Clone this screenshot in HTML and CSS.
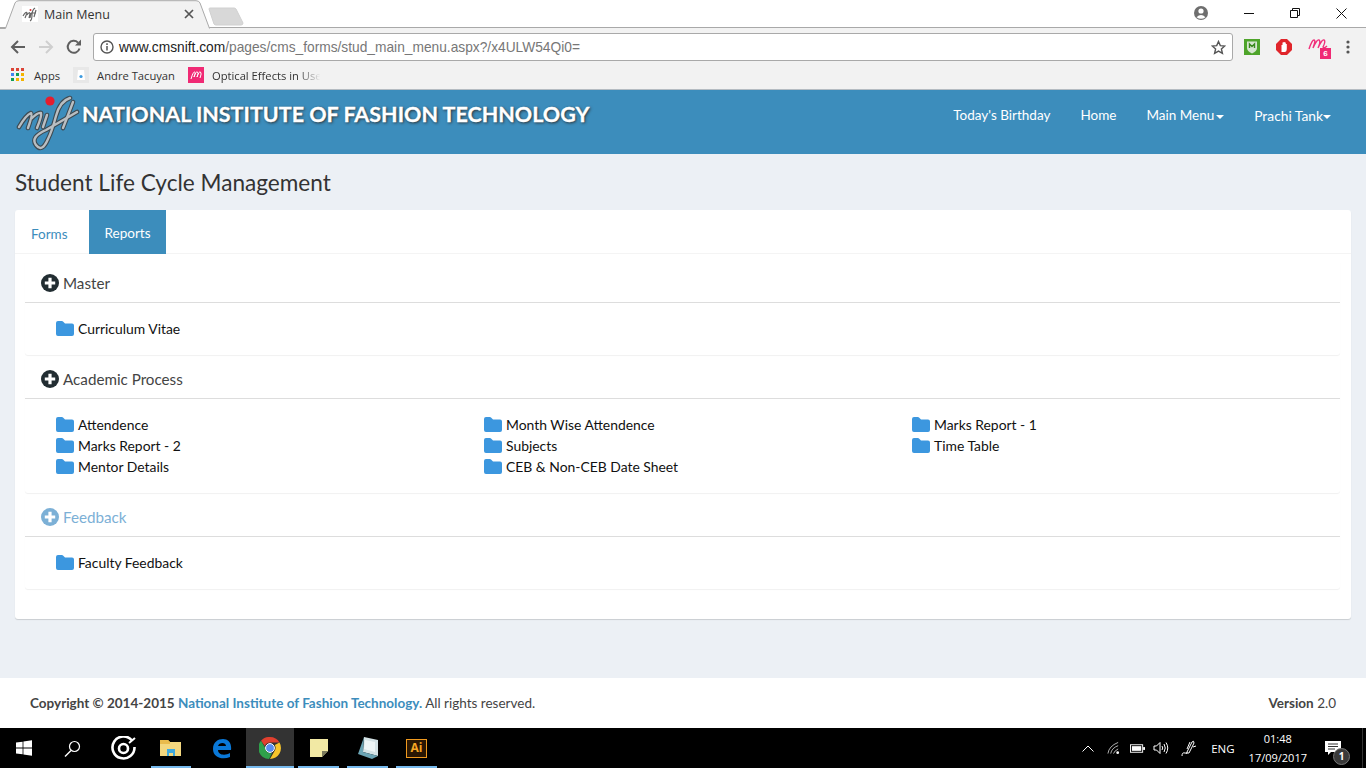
FILE: index.html
```html
<!DOCTYPE html>
<html lang="en">
<head>
<meta charset="utf-8">
<title>Main Menu</title>
<link rel="stylesheet" href="styles.css">
</head>
<body>
<div class="browser">
  <div class="tabstrip">
    <div class="tab">
      <svg class="tab-shape" width="210" height="29" viewBox="0 0 210 29"><path d="M0 28.5H5.5L15 3Q16 .7 19 .7H196Q199 .7 200 3L209.5 28.5" fill="#f2f2f2" stroke="#a9a9a9"/></svg>
      <svg class="favicon" width="16" height="16" viewBox="0 0 16 16"><rect width="16" height="16" fill="#fff"/><path d="M1 10Q4 5 5 7L3 12M5 9Q8 5 8 8L7 12M9 7L8 12M13 2Q10 4 10 9T8 15M9 7H14M14 4L12 11" fill="none" stroke="#666" stroke-width="1.2"/><circle cx="8.5" cy="4" r="1" fill="#d33"/></svg>
      <span class="tab-title">Main Menu</span>
      <svg class="tab-x" width="10" height="10" viewBox="0 0 10 10"><path d="M1 1L9 9M9 1L1 9" stroke="#555" stroke-width="1.7"/></svg>
    </div>
    <svg class="newtab" width="36" height="19" viewBox="0 0 36 19"><path d="M1 2Q1 1 2 1H26Q27 1 28 2L35 16Q35 18 33 18H8Q7 18 6 17Z" fill="#d8d8d8" stroke="#d0d0d0"/></svg>
    <div class="winctl">
      <svg class="user" width="16" height="16" viewBox="0 0 16 16"><circle cx="8" cy="8" r="7" fill="#6e6e6e"/><circle cx="8" cy="6" r="2.6" fill="#fff"/><path d="M3.5 12.2Q8 8 12.5 12.2Q8 15.5 3.5 12.2Z" fill="#fff"/></svg>
      <span class="winbtn"><svg width="10" height="10" viewBox="0 0 10 10"><path d="M0 5.5H10" stroke="#111"/></svg></span>
      <span class="winbtn"><svg width="10" height="10" viewBox="0 0 10 10"><path d="M.5 2.5H7.5V9.5H.5ZM2.5 2.5V.5H9.5V7.5H7.5" fill="none" stroke="#111"/></svg></span>
      <span class="winbtn"><svg width="11" height="11" viewBox="0 0 11 11"><path d="M.5.5L10.5 10.5M10.5.5L.5 10.5" stroke="#111"/></svg></span>
    </div>
  </div>
  <div class="toolbar">
    <svg class="navicon" width="16" height="16" viewBox="0 0 16 16"><path d="M15 8H2M8 2L2 8L8 14" fill="none" stroke="#5f5f5f" stroke-width="2"/></svg>
    <svg class="navicon" width="16" height="16" viewBox="0 0 16 16"><path d="M1 8H14M8 2L14 8L8 14" fill="none" stroke="#cfcfcf" stroke-width="2"/></svg>
    <svg class="navicon" width="16" height="16" viewBox="0 0 16 16"><path d="M13.5 9.5A6 6 0 1 1 12 3.6" fill="none" stroke="#5f5f5f" stroke-width="2"/><path d="M9 6.5H15V.5Z" fill="#5f5f5f"/></svg>
    <div class="omnibox">
      <svg width="14" height="14" viewBox="0 0 14 14"><circle cx="7" cy="7" r="6" fill="none" stroke="#555" stroke-width="1.4"/><path d="M7 6V10.5M7 3.2V4.9" stroke="#555" stroke-width="1.5"/></svg>
      <span class="url"><b>www.cmsnift.com</b>/pages/cms_forms/stud_main_menu.aspx?/x4ULW54Qi0=</span>
      <svg class="star" width="15" height="15" viewBox="0 0 15 15"><path d="M7.5 1.5L9.3 5.6L13.8 6L10.4 9L11.4 13.4L7.5 11.1L3.6 13.4L4.6 9L1.2 6L5.7 5.6Z" fill="none" stroke="#555" stroke-width="1.4"/></svg>
    </div>
    <div class="exts">
      <svg width="16" height="16" viewBox="0 0 16 16"><rect width="16" height="16" fill="#4ea42a"/><path d="M3 2.5H13V9Q13 12 8 14.5Q3 12 3 9Z" fill="#d6e6d0"/><path d="M5.5 9V5L8 7.5L10.5 5V9" fill="none" stroke="#3a8a1e" stroke-width="1.4"/></svg>
      <svg width="16" height="16" viewBox="0 0 16 16"><path d="M5 0H11L16 5V11L11 16H5L0 11V5Z" fill="#e0252b"/><path d="M5.5 13V6H6.5V3.5H7.5V3H8.7V3.5H9.8V5H10.8V9.5Q10.8 13 8.5 13Z" fill="#fff"/></svg>
      <span class="ext-m"><svg width="20" height="14" viewBox="0 0 20 14"><path d="M1 12Q4 3 6 3T5 11Q9 2 11 3T10 11Q14 2 16 3T15 10Q16 12 19 9" fill="none" stroke="#f0307a" stroke-width="1.4"/></svg><span class="badge">6</span></span>
      <svg width="4" height="14" viewBox="0 0 4 14"><circle cx="2" cy="2" r="1.6" fill="#555"/><circle cx="2" cy="7" r="1.6" fill="#555"/><circle cx="2" cy="12" r="1.6" fill="#555"/></svg>
    </div>
  </div>
  <div class="bookmarks">
    <span class="bm bm-apps">
      <svg width="14" height="14" viewBox="0 0 14 14"><g fill="#db4437"><rect width="3" height="3"/><rect x="5" width="3" height="3"/><rect x="10" width="3" height="3"/></g><g fill="#4285f4"><rect y="5" width="3" height="3"/></g><g fill="#0f9d58"><rect x="5" y="5" width="3" height="3"/><rect y="10" width="3" height="3"/></g><g fill="#f4b400"><rect x="10" y="5" width="3" height="3"/><rect x="5" y="10" width="3" height="3"/><rect x="10" y="10" width="3" height="3"/></g></svg>
      Apps
    </span>
    <span class="bm">
      <svg width="16" height="16" viewBox="0 0 16 16"><rect width="16" height="16" fill="#e8e8e8"/><path d="M5 3H11L12 13H4Z" fill="#fff"/><circle cx="8" cy="9.5" r="1.6" fill="#3d9be0"/></svg>
      Andre Tacuyan
    </span>
    <span class="bm bm-fade">
      <svg width="16" height="16" viewBox="0 0 16 16"><rect width="16" height="16" fill="#f02a74"/><path d="M3 12Q5 5 6.5 5T6 10Q8 4 9.5 5T9 10Q11 4 12.5 5T12 11" fill="none" stroke="#fff"/></svg>
      Optical Effects in User
    </span>
  </div>
</div>

<header class="navbar">
  <svg class="logo" width="64" height="62" viewBox="0 0 64 62"><g fill="none" stroke-linecap="round" stroke-linejoin="round" stroke="#3d4a52" stroke-width="4.6"><path d="M3 35Q10 23 15 21Q17 22 12 36M15 27Q22 20 25 21Q26 24 21 36"/><path d="M31 23L27 35"/><path d="M54 6Q44 9 40 24T32 47Q26 61 20 53T30 38L61 20"/><path d="M57 10Q51 26 47 36"/></g><g fill="none" stroke-linecap="round" stroke-linejoin="round" stroke="#b9bec2" stroke-width="2.4"><path d="M3 35Q10 23 15 21Q17 22 12 36M15 27Q22 20 25 21Q26 24 21 36"/><path d="M31 23L27 35"/><path d="M54 6Q44 9 40 24T32 47Q26 61 20 53T30 38L61 20"/><path d="M57 10Q51 26 47 36"/></g><circle cx="34" cy="9" r="4.6" fill="#e51d2e"/></svg>
  <h1 class="brand">NATIONAL INSTITUTE OF FASHION TECHNOLOGY</h1>
  <nav class="navlinks">
    <a>Today's Birthday</a>
    <a>Home</a>
    <a>Main Menu<i class="caret"></i></a>
    <a class="last">Prachi Tank<i class="caret tight"></i></a>
  </nav>
</header>

<main class="content">
  <h2 class="pagetitle">Student Life Cycle Management</h2>
  <div class="card">
    <div class="tabs">
      <a class="tablink">Forms</a>
      <a class="tablink active">Reports</a>
    </div>
    <section class="group">
      <h3 class="grouphead"><svg class="plus" width="18" height="18" viewBox="0 0 18 18"><use href="#plus"/></svg>Master</h3>
      <div class="items">
        <a class="item"><svg class="folder" width="18" height="15" viewBox="0 0 18 15"><use href="#folder"/></svg>Curriculum Vitae</a>
      </div>
    </section>
    <section class="group">
      <h3 class="grouphead"><svg class="plus" width="18" height="18" viewBox="0 0 18 18"><use href="#plus"/></svg>Academic Process</h3>
      <div class="items">
        <a class="item"><svg class="folder" width="18" height="15" viewBox="0 0 18 15"><use href="#folder"/></svg>Attendence</a>
        <a class="item"><svg class="folder" width="18" height="15" viewBox="0 0 18 15"><use href="#folder"/></svg>Month Wise Attendence</a>
        <a class="item"><svg class="folder" width="18" height="15" viewBox="0 0 18 15"><use href="#folder"/></svg>Marks Report - 1</a>
        <a class="item"><svg class="folder" width="18" height="15" viewBox="0 0 18 15"><use href="#folder"/></svg>Marks Report - 2</a>
        <a class="item"><svg class="folder" width="18" height="15" viewBox="0 0 18 15"><use href="#folder"/></svg>Subjects</a>
        <a class="item"><svg class="folder" width="18" height="15" viewBox="0 0 18 15"><use href="#folder"/></svg>Time Table</a>
        <a class="item"><svg class="folder" width="18" height="15" viewBox="0 0 18 15"><use href="#folder"/></svg>Mentor Details</a>
        <a class="item"><svg class="folder" width="18" height="15" viewBox="0 0 18 15"><use href="#folder"/></svg>CEB &amp; Non-CEB Date Sheet</a>
      </div>
    </section>
    <section class="group">
      <h3 class="grouphead faded"><svg class="plus" width="18" height="18" viewBox="0 0 18 18"><use href="#plus"/></svg>Feedback</h3>
      <div class="items">
        <a class="item"><svg class="folder" width="18" height="15" viewBox="0 0 18 15"><use href="#folder"/></svg>Faculty Feedback</a>
      </div>
    </section>
  </div>
</main>

<footer class="footer">
  <span><b>Copyright © 2014-2015 <a>National Institute of Fashion Technology.</a></b> All rights reserved.</span>
  <span><b>Version</b> 2.0</span>
</footer>

<div class="taskbar">
  <span class="tb"><svg width="16" height="16" viewBox="0 0 16 16"><path d="M0 2.6L6.6 1.7V7.5H0ZM7.4 1.5L16 .3V7.5H7.4ZM0 8.4H6.6V14.3L0 13.4ZM7.4 8.4H16V15.7L7.4 14.5Z" fill="#fff"/></svg></span>
  <span class="tb"><svg width="17" height="17" viewBox="0 0 17 17"><circle cx="10.5" cy="6.5" r="5" fill="none" stroke="#fff" stroke-width="1.2"/><path d="M7 10.5L1 16.5" stroke="#fff" stroke-width="1.4"/></svg></span>
  <span class="tb tb-gap"><svg width="25" height="25" viewBox="0 0 25 25"><path d="M21 4.5A11 11 0 1 0 23.5 11" fill="none" stroke="#fff" stroke-width="2.6"/><circle cx="12.5" cy="12.5" r="4.5" fill="none" stroke="#fff" stroke-width="2.6"/><path d="M18 7L24 2" stroke="#fff" stroke-width="2"/></svg></span>
  <span class="tb"><svg width="22" height="18" viewBox="0 0 22 18"><path d="M0 1H8L10 3H21V17H0Z" fill="#f3d77f"/><path d="M0 1H8L10 3V5H0Z" fill="#e9bb4d"/><path d="M7 10H15V17H13V14H9V17H7Z" fill="#3fa9de"/></svg><i class="run"></i></span>
  <span class="tb tb-edge"><svg width="20" height="21" viewBox="0 0 20 21"><path d="M1 11C1 4 6 1 11 1C16 1 20 5 19 12H6C6 17 13 18 18 15V19C11 22 1 20 1 11ZM6 8H14C14 4 7 4 6 8Z" fill="#0a78d7"/></svg></span>
  <span class="tb tb-active"><svg width="22" height="22" viewBox="0 0 22 22"><path d="M11 0A11 11 0 0 1 20.5 5.5H11A5.5 5.5 0 0 0 5.8 9L2 3.8A11 11 0 0 1 11 0Z" fill="#e0402f"/><path d="M20.5 5.5A11 11 0 0 1 11 22L15.7 13.8A5.5 5.5 0 0 0 15.8 8Z" fill="#f7c52c"/><path d="M2 3.8L6.2 11A5.5 5.5 0 0 0 13 16.1L10 22A11 11 0 0 1 2 3.8Z" fill="#2fa04b"/><circle cx="11" cy="11" r="4.4" fill="#5a8df0" stroke="#fff" stroke-width="1"/></svg><i class="run"></i></span>
  <span class="tb tb-wide"><svg width="18" height="18" viewBox="0 0 18 18"><path d="M0 0H18V12L12 18H0Z" fill="#f2e9a4"/><path d="M18 12H12V18Z" fill="#7b7a5c"/></svg><i class="run"></i></span>
  <span class="tb tb-wide"><svg width="22" height="24" viewBox="0 0 22 24"><path d="M7 1L21 4V20L6 16Z" fill="#d5e3e6"/><path d="M7 1L1 18L15 23L21 20L6 16Z" fill="#6ba4b4"/><path d="M8 4L18 6V16L7 13Z" fill="#eef5f6"/></svg><i class="run"></i></span>
  <span class="tb tb-wide"><span class="ai">Ai</span><i class="run"></i></span>
  <div class="tray">
    <svg class="t-chev" width="12" height="7" viewBox="0 0 12 7"><path d="M.5 6.5L6 1L11.5 6.5" fill="none" stroke="#fff"/></svg>
    <svg class="t-wifi" width="13" height="14" viewBox="0 0 14 14"><g fill="none" stroke="#bbb"><path d="M1 13Q2 5 12 1"/><path d="M4 13Q5 7 12 4.5"/><path d="M7 13Q8 10 12 8"/></g><circle cx="11.5" cy="12" r="1.5" fill="#fff"/></svg>
    <svg class="t-batt" width="15" height="9" viewBox="0 0 16 9"><rect x=".5" y=".5" width="13" height="8" fill="none" stroke="#fff"/><rect x="2" y="2" width="10" height="5" fill="#fff"/><rect x="14" y="3" width="2" height="3" fill="#fff"/></svg>
    <svg class="t-vol" width="16" height="14" viewBox="0 0 16 14"><path d="M1 5H3.5L7 1.5V12.5L3.5 9H1Z" fill="none" stroke="#fff"/><path d="M9 5Q10.5 7 9 9M11 3Q13.5 7 11 11M13 1.5Q16.5 7 13 12.5" fill="none" stroke="#fff"/></svg>
    <svg class="t-pen" width="16" height="17" viewBox="0 0 16 17"><path d="M1 16Q1 12 4 13T6 12L11 2Q13 0 13 3L8 13L5 13M9 2L6 9M12 7L15 6" fill="none" stroke="#fff"/></svg>
    <span class="t-lang">ENG</span>
    <span class="t-clock"><span>01:48</span><span>17/09/2017</span></span>
    <span class="t-note"><svg width="16" height="14" viewBox="0 0 16 14"><path d="M0 0H16V11H6L3 14V11H0Z" fill="#fff"/><path d="M3 3H13M3 5.5H13M3 8H10" stroke="#333"/></svg><span class="t-count">1</span></span>
    <i class="t-end"></i>
  </div>
</div>

<svg class="defs" width="0" height="0">
  <symbol id="plus" viewBox="0 0 18 18"><circle cx="9" cy="9" r="9" fill="currentColor"/><path d="M9 3.8V14.2M3.8 9H14.2" stroke="#fff" stroke-width="3.2"/></symbol>
  <symbol id="folder" viewBox="0 0 18 15"><path d="M0 2Q0 0 2 0H6Q7 0 8 1.5L9 2.5H16Q18 2.5 18 4.5V13Q18 15 16 15H2Q0 15 0 13Z" fill="#3c97df"/></symbol>
</svg>
</body>
</html>
```
FILE: styles.css
```css
* { box-sizing: border-box; }
html, body { margin: 0; height: 768px; overflow: hidden; }
body { display: flex; flex-direction: column; font-family: Lato, "Open Sans", sans-serif; font-size: 14px; color: #333; background: #ecf0f5; }
h1, h2, h3 { margin: 0; font-weight: 400; }
svg { display: block; flex: none; }
.defs { position: absolute; }

/* browser chrome */
.browser { height: 90px; flex: none; background: #f2f2f2; border-bottom: 1px solid #b5bcc2; font-family: "Open Sans", sans-serif; }
.tabstrip { height: 28px; background: #fff; display: flex; align-items: flex-start; position: relative; border-bottom: 1px solid #a9a9a9; }
.tab { position: relative; width: 210px; height: 28px; display: flex; align-items: center; z-index: 1; }
.tab-shape { position: absolute; left: 0; top: 0; }
.favicon { position: relative; margin-left: 22px; }
.tab-title { position: relative; margin-left: 6px; font-size: 12.5px; color: #333; flex: 1; }
.tab-x { position: relative; margin-right: 16px; }
.newtab { margin: 7px 0 0 -2px; }
.winctl { margin-left: auto; display: flex; align-items: center; height: 26px; margin-right: 2px; }
.user { margin-right: 17px; }
.winbtn { width: 46px; display: flex; justify-content: center; }
.toolbar { height: 35px; display: flex; align-items: center; padding: 3px 0 0 10px; }
.navicon { margin-right: 12px; }
.omnibox { width: 1140px; height: 28px; margin-left: -1px; background: #fff; border: 1px solid #a9a9a9; border-radius: 3px; display: flex; align-items: center; padding: 0 6px; }
.url { margin-left: 5px; font-family: "Liberation Sans", sans-serif; font-size: 13.75px; color: #777; flex: 1; }
.url b { font-weight: 400; color: #222; }
.exts { display: flex; align-items: center; margin-left: 11px; gap: 16px; }
.ext-m { position: relative; display: block; width: 22px; height: 20px; }
.badge { position: absolute; right: -1px; bottom: -2px; width: 11px; height: 11px; background: #f02a74; color: #fff; font: 700 8px/11px "Liberation Sans", sans-serif; text-align: center; }
.bookmarks { height: 26px; display: flex; align-items: center; padding: 0 0 2px 11px; font-size: 11.2px; color: #333; }
.bm { display: flex; align-items: center; gap: 8px; margin-right: 13px; white-space: nowrap; }
.bm-apps { gap: 9px; }
.bm-fade { -webkit-mask-image: linear-gradient(90deg, #000 80%, transparent 96%); mask-image: linear-gradient(90deg, #000 80%, transparent 96%); }

/* site navbar */
.navbar { height: 64px; flex: none; background: #3c8dbc; display: flex; align-items: center; padding: 0 0 14px 16px; color: #fff; }
.logo { align-self: flex-start; margin: 2px 2px 0 0; }
.brand { font-size: 21.5px; line-height: 24px; margin-top: -2px; font-weight: 700; -webkit-text-stroke: .3px #fff; text-shadow: 1px 1px 3px #2a2a2a; white-space: nowrap; }
.navlinks { margin-left: auto; display: flex; align-items: center; }
.navlinks a { padding: 0 15px; white-space: nowrap; font-size: 13.5px; }
.navlinks a.last { padding-right: 35px; font-size: 13.8px; }
.caret { display: inline-block; margin-left: 2px; vertical-align: middle; border-top: 4px solid #fff; border-left: 4px solid transparent; border-right: 4px solid transparent; }
.caret.tight { margin-left: 0; }

/* content */
.content { flex: 1; padding: 15px 15px 0; }
.pagetitle { font-size: 22.6px; line-height: 27px; color: #333; margin-bottom: 14px; }
.card { height: 409px; background: #fff; border-radius: 3px; box-shadow: 0 1px 1px rgba(0,0,0,.15); padding: 0 11px 0 10px; }
.tabs { display: flex; height: 44px; margin: 0 -11px 6px -10px; border-bottom: 1px solid #f4f4f4; }
.tablink { display: block; padding: 0 21px 0 16px; line-height: 48px; color: #3c8dbc; font-size: 13.5px; }
.tablink.active { padding: 0 15px 0 16px; background: #3c8dbc; color: #fff; line-height: 46px; height: 44px; }
.group { border-radius: 3px; box-shadow: 0 1px 1px rgba(0,0,0,.06); margin-bottom: 1px; }
.grouphead { height: 43px; padding: 4px 0 0 16px; display: flex; align-items: center; gap: 4px; font-size: 15.2px; color: #444; border-bottom: 1px solid #ddd; }
.plus { color: #222d32; }
.grouphead.faded, .faded .plus { color: #7cb0d6; }
.items { padding: 15px 16px 16px 31px; display: grid; grid-template-columns: repeat(3, 428px); grid-auto-rows: 21px; }
.item { display: flex; align-items: center; gap: 4px; color: #111; font-size: 13.9px; white-space: nowrap; }

/* footer */
.footer { height: 50px; flex: none; background: #fff; display: flex; align-items: center; justify-content: space-between; padding: 0 30px; color: #444; font-size: 13.5px; }
.footer a { color: #3c8dbc; }

/* taskbar */
.taskbar { height: 40px; flex: none; background: #000; display: flex; color: #fff; font-family: "Open Sans", sans-serif; }
.tb { position: relative; width: 48px; height: 40px; display: flex; align-items: center; justify-content: center; }
.tb-gap { margin-left: 3px; }
.tb-edge { margin-left: 2px; width: 49px; }
.tb-wide { width: 49px; }
.tb-active { background: #333; }
.run { position: absolute; left: 4px; right: 4px; bottom: 0; height: 2px; background: #76b9ed; }
.tb-active .run { left: 0; right: 0; }
.ai { width: 21px; height: 19px; border: 1px solid #f09a1f; background: #2a1703; color: #f6a623; font-size: 12px; font-weight: 700; line-height: 16px; text-align: center; }
.tray { margin-left: auto; display: flex; align-items: center; height: 40px; font-size: 12px; }
.t-chev { margin-right: 13px; }
.t-wifi { margin-right: 10px; }
.t-batt { margin-right: 8px; }
.t-vol { margin-right: 12px; }
.t-pen { margin-right: 14px; }
.t-lang { margin-right: 14px; font-size: 11.5px; }
.t-clock { display: flex; flex-direction: column; align-items: center; line-height: 19px; font-size: 11px; margin-right: 18px; }
.t-note { position: relative; display: block; width: 16px; height: 14px; margin-right: 21px; }
.t-count { position: absolute; left: 8px; top: 7px; width: 17px; height: 17px; border-radius: 50%; background: #3a3a3a; border: 1px solid #777; font-size: 10px; font-weight: 700; line-height: 15px; text-align: center; }
.t-end { width: 1px; height: 40px; background: #333; margin-right: 3px; }
```
